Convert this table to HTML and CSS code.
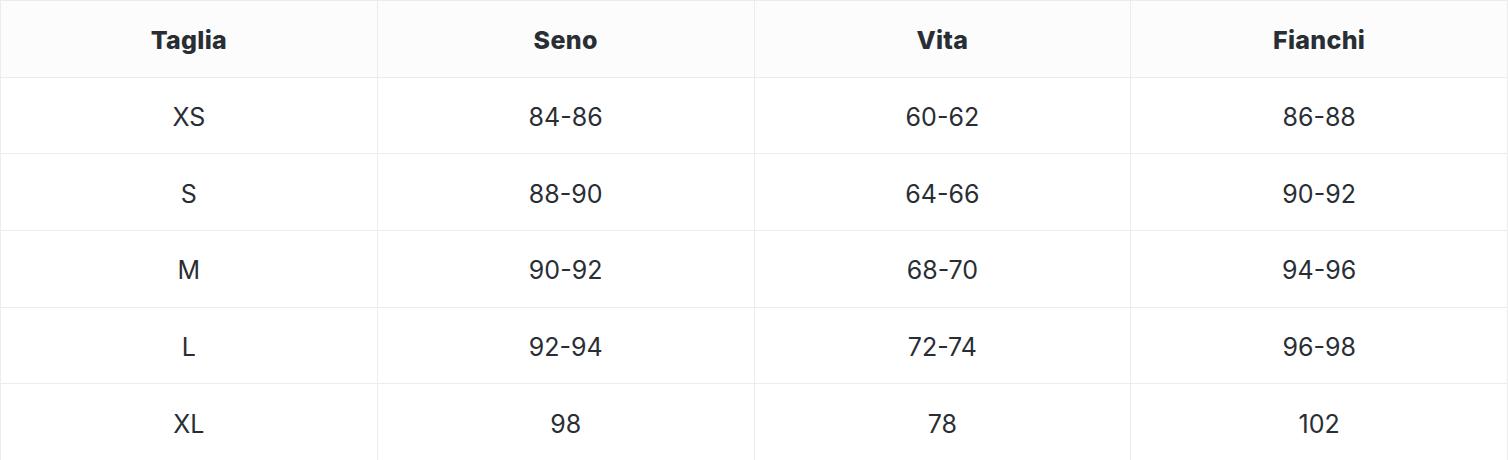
FILE: index.html
```html
<!DOCTYPE html>
<html lang="it">
<head>
<meta charset="utf-8">
<title>Taglie</title>
<link rel="stylesheet" href="styles.css">
</head>
<body>
<table class="size-table">
  <thead>
    <tr><th>Taglia</th><th>Seno</th><th>Vita</th><th>Fianchi</th></tr>
  </thead>
  <tbody>
    <tr><td>XS</td><td>84-86</td><td>60-62</td><td>86-88</td></tr>
    <tr><td>S</td><td>88-90</td><td>64-66</td><td>90-92</td></tr>
    <tr><td>M</td><td>90-92</td><td>68-70</td><td>94-96</td></tr>
    <tr><td>L</td><td>92-94</td><td>72-74</td><td>96-98</td></tr>
    <tr><td>XL</td><td>98</td><td>78</td><td>102</td></tr>
  </tbody>
</table>
</body>
</html>
```
FILE: styles.css
```css
html, body {
  margin: 0;
  padding: 0;
  background: #ffffff;
}
.size-table {
  width: 100%;
  height: 460px;
  border-collapse: collapse;
  table-layout: fixed;
  font-family: Inter, "Noto Sans", sans-serif;
  color: #292e34;
  border: 1px solid #e3e3e3;
}
.size-table tr {
  height: 76.67px;
}
.size-table th,
.size-table td {
  border: 1px solid #ececec;
  text-align: center;
  vertical-align: middle;
  padding: 3px 0 0;
  font-size: 25px;
  line-height: 1.2;
}
.size-table th {
  background: #fcfcfc;
  font-weight: 800;
  font-size: 25px;
  letter-spacing: 0.3px;
}
.size-table td {
  font-weight: 400;
}
```
